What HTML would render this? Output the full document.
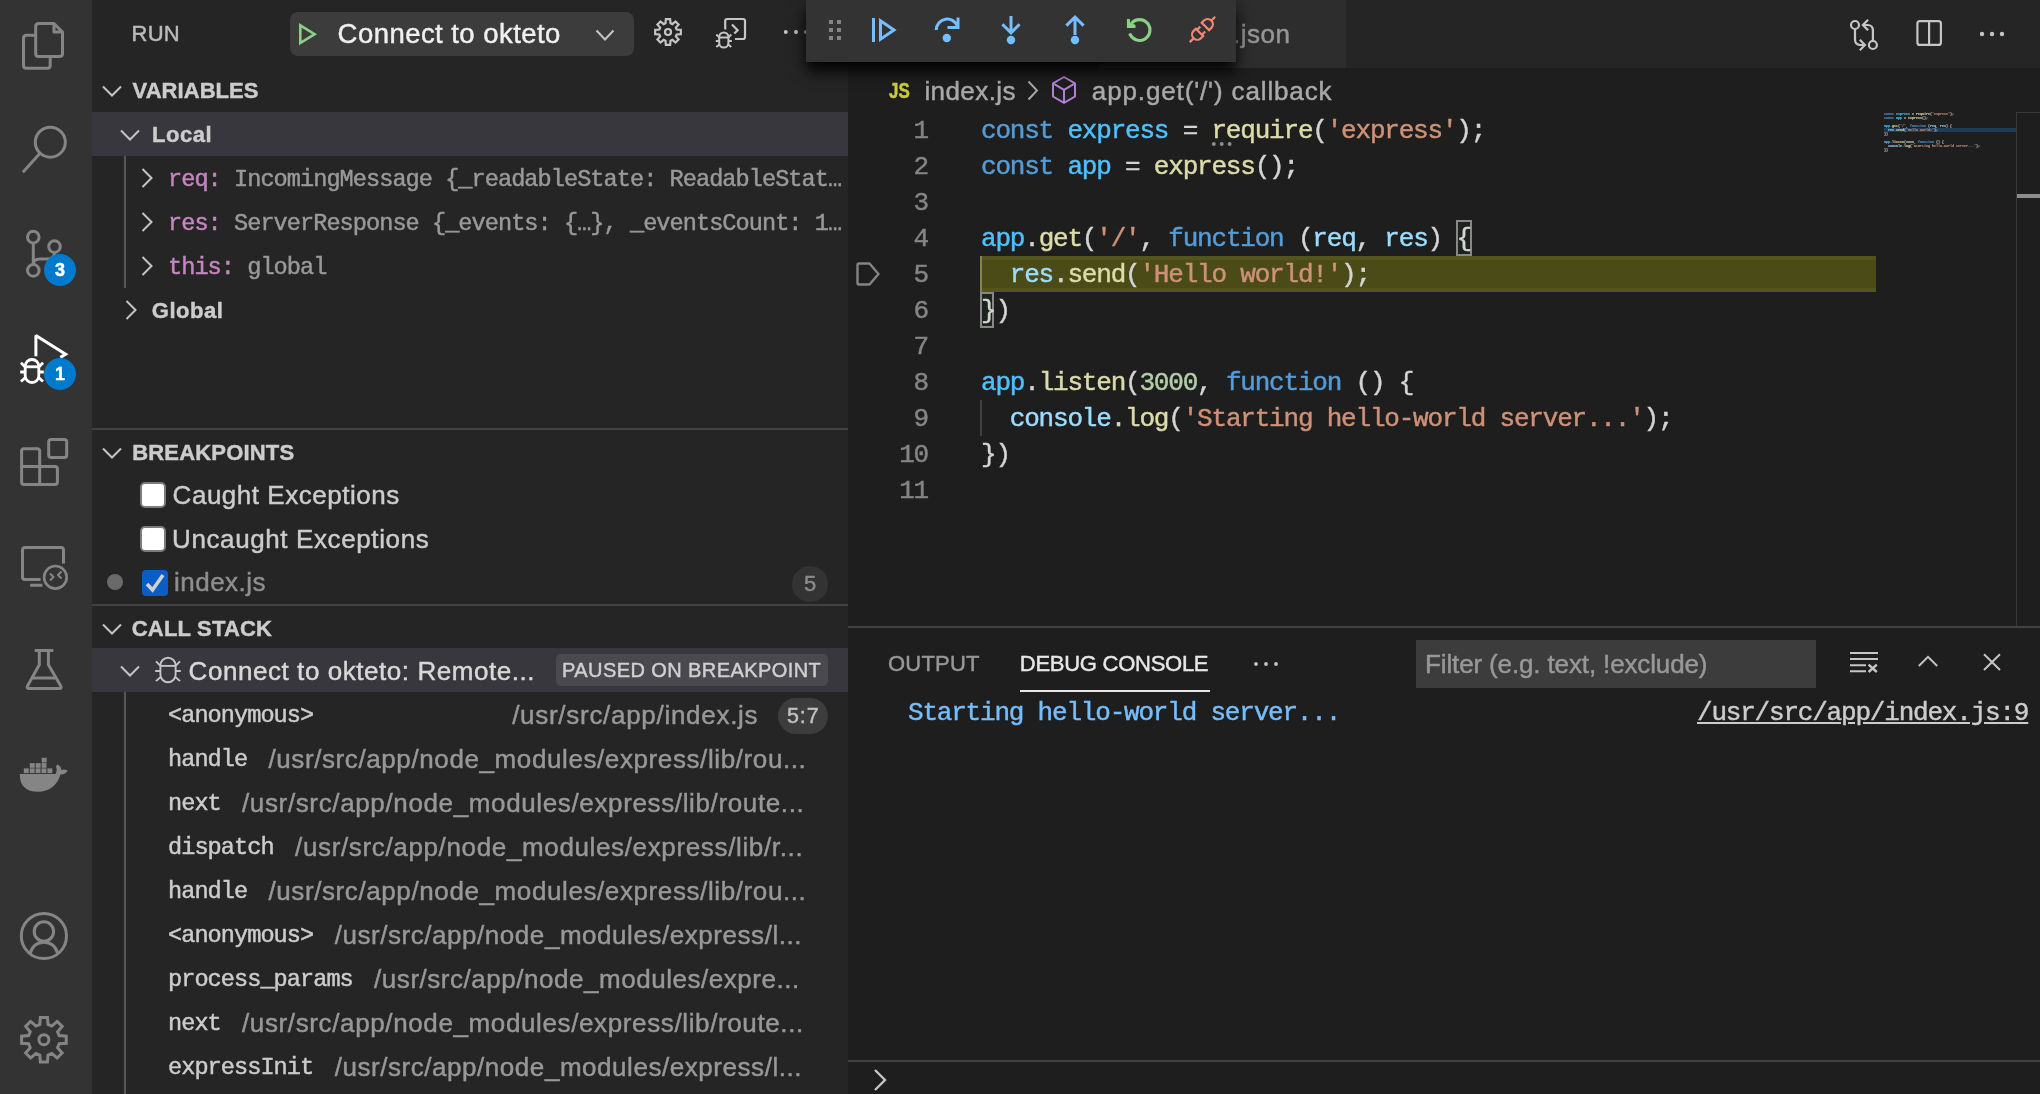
<!DOCTYPE html>
<html lang="en">
<head>
<meta charset="utf-8">
<title>index.js - Run and Debug</title>
<style>
*{box-sizing:border-box;margin:0;padding:0}
html,body{width:2040px;height:1094px;overflow:hidden;background:#1e1e1e}
body{position:relative;font-family:"Liberation Sans",sans-serif;color:#cccccc;-webkit-text-stroke:0.45px}
.abs{position:absolute}
#activity,#sidebar,#editor,#dbgbar{will-change:transform}
.mono{font-family:"Liberation Mono",monospace}
svg{display:block;overflow:visible}
.t{position:absolute;white-space:pre}
#activity{left:0;top:0;width:92px;height:1094px;background:#333333}
.badge{position:absolute;width:32px;height:32px;border-radius:16px;background:#007acc;color:#fff;font-size:18px;font-weight:bold;text-align:center;line-height:32px}
#sidebar{left:92px;top:0;width:756px;height:1094px;background:#252526;overflow:hidden}
.sel{position:absolute;left:0;width:756px;height:44px;background:#37373d}
.hdr{font-weight:bold;font-size:22px;color:#cccccc;height:44px;line-height:44px}
.ui{font-size:26px;height:44px;line-height:44px}
.sm{font-size:23.6px;letter-spacing:-0.96px;height:44px;line-height:47px}
.vn{color:#c586c0}
.vv{color:#999999}
.tw{position:absolute;left:0;top:0;fill:none;stroke:#c5c5c5;stroke-width:2}
#editor{left:848px;top:0;width:1192px;height:1094px;background:#1e1e1e;overflow:hidden}
.ln{position:absolute;left:0;width:80px;text-align:right;color:#858585;font-size:26px;letter-spacing:-1.2px;height:36px;line-height:38px}
.cl{position:absolute;left:133px;font-size:26px;letter-spacing:-1.2px;height:36px;line-height:38px;white-space:pre;color:#d4d4d4}
.k{color:#569cd6}.c{color:#4fc1ff}.f{color:#dcdcaa}.s{color:#ce9178}.v{color:#9cdcfe}.n{color:#b5cea8}
#mm{position:absolute;left:1036px;top:112px;transform-origin:0 0;transform:scale(0.1389,0.1111);width:1000px}
#mm div{height:36px;line-height:36px;font-size:24px;white-space:pre;color:#d4d4d4;font-weight:bold}
</style>
</head>
<body>
<div id="activity" class="abs">
<svg class="abs" style="left:0;top:0" width="92" height="1094" viewBox="0 0 92 1094" fill="none" stroke="#858585" stroke-width="3" stroke-linejoin="round">
<path d="M38.7 23.5 H54 L62.5 32 V53.5 Q62.5 56.5 59.5 56.5 H38.7 Q35.7 56.5 35.7 53.5 V26.5 Q35.7 23.5 38.7 23.5 Z M54 23.5 V32 H62.5"/>
<path d="M35.7 35.3 H26.5 Q23.5 35.3 23.5 38.3 V65.3 Q23.5 68.3 26.5 68.3 H47.2 Q50.2 68.3 50.2 65.3 V56.5"/>
<circle cx="50.3" cy="142.2" r="15"/><path d="M39.8 153.5 L22.9 172.2"/>
<circle cx="33.3" cy="237.1" r="5.8"/><circle cx="33.3" cy="270.4" r="5.8"/><circle cx="54.5" cy="246.6" r="5.8"/>
<path d="M33.3 243 V264.5 M54.5 252.4 Q54.5 259 47 259 H40 Q33.3 259 33.3 264"/>
<path d="M24 448.7 H37.3 Q39.7 448.7 39.7 451.1 V466.6 H55 Q57.4 466.6 57.4 469 V482.1 Q57.4 484.5 55 484.5 H24 Q21.6 484.5 21.6 482.1 V451.1 Q21.6 448.7 24 448.7 Z M39.7 466.6 V484.5 M21.6 466.6 H39.7"/>
<rect x="48.7" y="439.5" width="18" height="18" rx="2.5"/>
<path d="M40.6 579.5 H25 Q22.5 579.5 22.5 577 V550 Q22.5 547.5 25 547.5 H61 Q63.5 547.5 63.5 550 V563.5 M30.2 585.2 H42.4"/>
<circle cx="55.4" cy="577.3" r="11.3" stroke-width="2.6"/>
<path d="M50 573.5 L53.5 577 L50 580.5 M61.5 571.5 L58 575 L61.5 578.5" stroke-width="2"/>
<path d="M34.7 650.5 H53.4 M39.3 650.5 V664.8 L27.5 686 Q26.5 688.5 29 688.5 H59.3 Q61.8 688.5 60.8 686 L48.4 664.8 V650.5 M32.7 678 H55.5"/>
<g stroke="none" fill="#858585">
<path d="M19.8 774 H55.5 Q57.5 770.5 56 766.5 L57.5 764.3 Q61 766.5 61.5 770 Q65 769 67.6 770.6 Q66 774.5 60.5 774.6 Q55 791.8 38 791.8 Q19.7 791.8 19.8 774 Z"/>
<rect x="23.8" y="768.4" width="4.9" height="4.7"/>
<rect x="29.7" y="768.4" width="4.9" height="4.7"/>
<rect x="35.6" y="768.4" width="4.9" height="4.7"/>
<rect x="41.5" y="768.4" width="4.9" height="4.7"/>
<rect x="47.4" y="768.4" width="4.9" height="4.7"/>
<rect x="29.8" y="763.1" width="4.9" height="4.7"/>
<rect x="35.7" y="763.1" width="4.9" height="4.7"/>
<rect x="41.6" y="763.1" width="4.9" height="4.7"/>
<rect x="41.7" y="757.8" width="4.9" height="4.7"/>
</g>
<circle cx="43.9" cy="936" r="22.6"/><circle cx="43.9" cy="931.5" r="9.7"/><path d="M30 953.5 Q33.5 942.3 43.9 942.3 Q54.3 942.3 57.8 953.5"/>
<path d="M47.99 1024.44 L47.44 1017.38 L40.36 1017.38 L39.81 1024.44 L36.00 1026.02 L30.62 1021.42 L25.62 1026.42 L30.22 1031.80 L28.64 1035.61 L21.58 1036.16 L21.58 1043.24 L28.64 1043.79 L30.22 1047.60 L25.62 1052.98 L30.62 1057.98 L36.00 1053.38 L39.81 1054.96 L40.36 1062.02 L47.44 1062.02 L47.99 1054.96 L51.80 1053.38 L57.18 1057.98 L62.18 1052.98 L57.58 1047.60 L59.16 1043.79 L66.22 1043.24 L66.22 1036.16 L59.16 1035.61 L57.58 1031.80 L62.18 1026.42 L57.18 1021.42 L51.80 1026.02 Z" stroke-linejoin="miter"/><circle cx="43.9" cy="1039.7" r="5"/>
<g stroke="#ffffff"><path d="M35.9 356.3 V335.6 L65.6 354.3 L60.3 357.4" stroke-linejoin="miter" stroke-miterlimit="2" stroke-width="3"/></g>
<g fill="none" stroke="#ffffff" stroke-width="2.8" stroke-linecap="butt"><path d="M25.2 366.3 A6.8 6.8 0 0 1 38.8 366.3 V375.7 A6.8 6.8 0 0 1 25.2 375.7 Z"/><path d="M25.2 366.8 H38.8"/><path d="M25.2 372 H20.2 M38.8 372 H43.8"/><path d="M25.2 366.975 L20.95 362.725 M38.8 366.975 L43.05 362.725"/><path d="M25.7 377.325 L20.95 381.575 M38.3 377.325 L43.05 381.575"/></g>
</svg>
<div class="badge" style="left:44px;top:254px">3</div>
<div class="badge" style="left:44px;top:358px">1</div>
</div>
<div id="sidebar" class="abs">
<div id="run" class="t " style="left:39.6px;top:12px;letter-spacing:0.2px;font-size:22px;height:44px;line-height:44px;color:#bbbbbb">RUN</div>
<div class="abs" style="left:198px;top:12px;width:344px;height:44px;border-radius:8px;background:#3c3c3c"></div>
<svg class="abs" style="left:0;top:0" width="1" height="1"><path d="M208.3 25.4 L222.6 34.2 L208.3 43 Z" fill="none" stroke="#89d185" stroke-width="2.6" stroke-linejoin="miter"/></svg>
<div id="cfg" class="t ui" style="left:245.6px;top:12px;letter-spacing:0.452px;color:#f0f0f0;font-size:27.5px">Connect to okteto</div>
<svg class="tw" width="1" height="1" ><path d="M504.5 30.5 L513 39.5 L521.5 30.5"/></svg>
<svg class="abs" style="left:0;top:0" width="756" height="68" viewBox="92 0 756 68" fill="none" stroke="#c5c5c5" stroke-width="2.2">
<path d="M670.48 23.35 L670.15 19.18 L665.85 19.18 L665.52 23.35 L663.64 24.13 L660.45 21.42 L657.42 24.45 L660.13 27.64 L659.35 29.52 L655.18 29.85 L655.18 34.15 L659.35 34.48 L660.13 36.36 L657.42 39.55 L660.45 42.58 L663.64 39.87 L665.52 40.65 L665.85 44.82 L670.15 44.82 L670.48 40.65 L672.36 39.87 L675.55 42.58 L678.58 39.55 L675.87 36.36 L676.65 34.48 L680.82 34.15 L680.82 29.85 L676.65 29.52 L675.87 27.64 L678.58 24.45 L675.55 21.42 L672.36 24.13 Z" stroke-linejoin="miter"/><circle cx="668" cy="32" r="3"/>
<path d="M725.2 29.5 V21 Q725.2 19 727.2 19 H743 Q745 19 745 21 V37 Q745 39 743 39 H735" stroke-linejoin="round"/>
<path d="M732 24.5 L737.6 30.2 L734.3 33.5"/>
<g fill="none" stroke="#c5c5c5" stroke-width="2" stroke-linecap="butt"><path d="M719.2 37 A4.6 4.6 0 0 1 728.4 37 V43 A4.6 4.6 0 0 1 719.2 43 Z"/><path d="M719.2 37.5 H728.4"/><path d="M719.2 41 H715.8 M728.4 41 H731.8"/><path d="M719.2 37.34 L716.31 34.45 M728.4 37.34 L731.29 34.45"/><path d="M719.7 44.18 L716.31 47.07 M727.9 44.18 L731.29 47.07"/></g>
<g fill="#c5c5c5" stroke="none"><circle cx="785.8" cy="32" r="2"/><circle cx="796" cy="32" r="2"/><circle cx="806" cy="32" r="2"/></g>
</svg>
<svg class="tw" width="1" height="1" ><path d="M11 86.5 L20 95.5 L29 86.5"/></svg>
<div id="h_var" class="t hdr" style="left:40.6px;top:69px;letter-spacing:0.05px;">VARIABLES</div>
<div class="sel" style="top:112px"></div>
<svg class="tw" width="1" height="1" ><path d="M29 130.5 L38 139.5 L47 130.5"/></svg>
<div id="local" class="t hdr" style="left:60px;top:113px;letter-spacing:0.55px;">Local</div>
<div class="abs" style="left:32px;top:156px;width:2px;height:132px;background:#585858"></div>
<svg class="tw" width="1" height="1" ><path d="M50.5 169 L59.5 178 L50.5 187"/></svg>
<div id="var0" class="t mono sm" style="left:76px;top:156px;"><span class="vn">req:</span><span class="vv"> IncomingMessage {_readableState: ReadableStat…</span></div>
<svg class="tw" width="1" height="1" ><path d="M50.5 213 L59.5 222 L50.5 231"/></svg>
<div id="var1" class="t mono sm" style="left:76px;top:200px;"><span class="vn">res:</span><span class="vv"> ServerResponse {_events: {…}, _eventsCount: 1…</span></div>
<svg class="tw" width="1" height="1" ><path d="M50.5 257 L59.5 266 L50.5 275"/></svg>
<div id="var2" class="t mono sm" style="left:76px;top:244px;"><span class="vn">this:</span><span class="vv"> global</span></div>
<svg class="tw" width="1" height="1" ><path d="M34.5 301 L43.5 310 L34.5 319"/></svg>
<div id="global" class="t hdr" style="left:59.8px;top:289px;letter-spacing:0.52px;">Global</div>
<div class="abs" style="left:0;top:428px;width:756px;height:2px;background:#424242"></div>
<svg class="tw" width="1" height="1" ><path d="M11 448.5 L20 457.5 L29 448.5"/></svg>
<div id="h_bp" class="t hdr" style="left:40.2px;top:431px;letter-spacing:0.18px;">BREAKPOINTS</div>
<div class="abs" style="left:48px;top:482px;width:26px;height:26px;border-radius:5px;background:#fff;border:2px solid #7c7c7c"></div>
<div id="bp0" class="t ui" style="left:80.6px;top:473px;letter-spacing:0.526px;color:#cccccc">Caught Exceptions</div>
<div class="abs" style="left:48px;top:526px;width:26px;height:26px;border-radius:5px;background:#fff;border:2px solid #7c7c7c"></div>
<div id="bp1" class="t ui" style="left:80px;top:517px;letter-spacing:0.611px;color:#cccccc">Uncaught Exceptions</div>
<div class="abs" style="left:15px;top:574px;width:16px;height:16px;border-radius:8px;background:#6a6a6a"></div>
<div class="abs" style="left:50px;top:570px;width:26px;height:26px;border-radius:4px;background:#0b5cc4"></div>
<svg class="abs" style="left:0;top:0" width="1" height="1"><path d="M55 584 L60.5 590 L71 575" fill="none" stroke="#d0d0d0" stroke-width="3.6"/></svg>
<div id="bp2" class="t ui" style="left:82px;top:560px;letter-spacing:0.486px;color:#8e8e8e">index.js</div>
<div class="abs" style="left:700px;top:566px;width:36px;height:36px;border-radius:18px;background:#333334"></div>
<div id="bpn" class="t " style="left:712px;top:566px;font-size:22px;height:36px;line-height:36px;color:#8b8b8b">5</div>
<div class="abs" style="left:0;top:604px;width:756px;height:2px;background:#424242"></div>
<svg class="tw" width="1" height="1" ><path d="M11 624.5 L20 633.5 L29 624.5"/></svg>
<div id="h_cs" class="t hdr" style="left:39.8px;top:607px;letter-spacing:0.176px;">CALL STACK</div>
<div class="sel" style="top:648px"></div>
<svg class="tw" width="1" height="1" ><path d="M29 666.5 L38 675.5 L47 666.5"/></svg>
<svg class="abs" style="left:0;top:0" width="756" height="1094" viewBox="92 0 756 1094"><g fill="none" stroke="#c5c5c5" stroke-width="1.9" stroke-linecap="butt"><path d="M160.4 665.4 A7.6 7.6 0 0 1 175.6 665.4 V674.6 A7.6 7.6 0 0 1 160.4 674.6 Z"/><path d="M160.4 665.9 H175.6"/><path d="M160.4 671 H155.2 M175.6 671 H180.8"/><path d="M160.4 665.73 L155.98 661.31 M175.6 665.73 L180.02 661.31"/><path d="M160.9 676.71 L155.98 681.13 M175.1 676.71 L180.02 681.13"/></g></svg>
<div id="sess" class="t ui" style="left:96.6px;top:649px;letter-spacing:0.556px;color:#d8d8d8">Connect to okteto: Remote...</div>
<div class="abs" style="left:464px;top:654px;width:272px;height:32px;border-radius:5px;background:#49494e"></div>
<div id="paused" class="t " style="left:470px;top:654px;letter-spacing:0.421px;font-size:20px;height:32px;line-height:32px;color:#d0d0d0">PAUSED ON BREAKPOINT</div>
<div class="abs" style="left:32px;top:692px;width:2px;height:402px;background:#585858"></div>
<div id="fn0" class="t mono sm" style="left:76px;top:692px;color:#cccccc">&lt;anonymous&gt;</div>
<div id="fp0" class="t ui" style="left:420.2px;top:693px;letter-spacing:0.71px;color:#989898">/usr/src/app/index.js</div>
<div id="fn1" class="t mono sm" style="left:76px;top:736px;color:#cccccc">handle</div>
<div id="fp1" class="t ui" style="left:176.4px;top:737px;letter-spacing:0.601px;color:#989898">/usr/src/app/node_modules/express/lib/rou...</div>
<div id="fn2" class="t mono sm" style="left:76px;top:780px;color:#cccccc">next</div>
<div id="fp2" class="t ui" style="left:150px;top:781px;letter-spacing:0.634px;color:#989898">/usr/src/app/node_modules/express/lib/route...</div>
<div id="fn3" class="t mono sm" style="left:76px;top:824px;color:#cccccc">dispatch</div>
<div id="fp3" class="t ui" style="left:203.1px;top:825px;letter-spacing:0.641px;color:#989898">/usr/src/app/node_modules/express/lib/r...</div>
<div id="fn4" class="t mono sm" style="left:76px;top:868px;color:#cccccc">handle</div>
<div id="fp4" class="t ui" style="left:176.4px;top:869px;letter-spacing:0.601px;color:#989898">/usr/src/app/node_modules/express/lib/rou...</div>
<div id="fn5" class="t mono sm" style="left:76px;top:912px;color:#cccccc">&lt;anonymous&gt;</div>
<div id="fp5" class="t ui" style="left:242.7px;top:913px;letter-spacing:0.547px;color:#989898">/usr/src/app/node_modules/express/l...</div>
<div id="fn6" class="t mono sm" style="left:76px;top:956px;color:#cccccc">process_params</div>
<div id="fp6" class="t ui" style="left:282.1px;top:957px;letter-spacing:0.533px;color:#989898">/usr/src/app/node_modules/expre...</div>
<div id="fn7" class="t mono sm" style="left:76px;top:1000px;color:#cccccc">next</div>
<div id="fp7" class="t ui" style="left:150px;top:1001px;letter-spacing:0.622px;color:#989898">/usr/src/app/node_modules/express/lib/route...</div>
<div id="fn8" class="t mono sm" style="left:76px;top:1044px;color:#cccccc">expressInit</div>
<div id="fp8" class="t ui" style="left:242.7px;top:1045px;letter-spacing:0.547px;color:#989898">/usr/src/app/node_modules/express/l...</div>
<div class="abs" style="left:686px;top:698px;width:50px;height:36px;border-radius:18px;background:#3d3d3e"></div>
<div id="lc" class="t " style="left:695px;top:698px;font-size:21.5px;letter-spacing:0.9px;height:36px;line-height:36px;color:#c0c0c0">5:7</div>
</div>
<div id="editor" class="abs">
<div class="abs" style="left:0;top:0;width:1192px;height:68px;background:#252526"></div>
<div class="abs" style="left:0;top:0;width:250px;height:68px;background:#1e1e1e"></div>
<div class="abs" style="left:252px;top:0;width:246px;height:68px;background:#2d2d2d"></div>
<div id="tab2" class="t ui" style="left:305px;top:12px;letter-spacing:0.55px;color:#969696">launch.json</div>
<svg class="abs" style="left:0;top:0" width="1192" height="68" viewBox="848 0 1192 68" fill="none" stroke="#c5c5c5" stroke-width="2.2">
<circle cx="1855" cy="25" r="4"/><circle cx="1872.9" cy="45" r="4"/>
<path d="M1855 29.2 V39.5 Q1855 45 1860.5 45 H1864.5 M1859.8 39.8 L1865 45 L1859.8 50.2"/>
<path d="M1872.9 40.8 V30.5 Q1872.9 25 1867.4 25 H1863.4 M1868.1 19.8 L1862.9 25 L1868.1 30.2"/>
<rect x="1917.4" y="21.1" width="23.5" height="23.8" rx="2.5"/><path d="M1929.1 21 V45"/>
<g fill="#c5c5c5" stroke="none"><circle cx="1982" cy="34" r="2.2"/><circle cx="1992" cy="34" r="2.2"/><circle cx="2002" cy="34" r="2.2"/></g>
</svg>
<div id="js" class="t " style="left:41px;top:79px;font-size:22px;font-weight:bold;color:#cbcb41;line-height:24px;height:24px;transform-origin:0 50%;transform:scaleX(0.77)">JS</div>
<div id="bc1" class="t ui" style="left:76.4px;top:69px;letter-spacing:0.429px;color:#a9a9a9">index.js</div>
<svg class="abs" style="left:0;top:0" width="1" height="1"><path d="M180.5 81.5 L189 90.5 L180.5 99.5" fill="none" stroke="#a9a9a9" stroke-width="1.9"/></svg>
<svg class="abs" style="left:0;top:0" width="1192" height="120" viewBox="848 0 1192 120" fill="none" stroke="#b180d7" stroke-width="2" stroke-linejoin="round"><path d="M1064 77 L1075 83.3 V96.5 L1064 102.8 L1053 96.5 V83.3 Z M1053 83.3 L1064 89.8 L1075 83.3 M1064 89.8 V102.8"/></svg>
<div id="bc2" class="t ui" style="left:243.8px;top:69px;letter-spacing:0.87px;color:#a9a9a9">app.get('/') callback</div>
<div class="abs" style="left:132px;top:256px;width:896px;height:36px;background:#4b4b18;border-top:4px solid #54541d;border-bottom:4px solid #54541d"></div>
<div class="abs" style="left:132px;top:256px;width:2px;height:36px;background:#85854a"></div>
<div class="abs" style="left:132px;top:400px;width:2px;height:36px;background:#404040"></div>
<div class="abs" style="left:608px;top:220px;width:16px;height:36px;border:2px solid #888888;background:#1b251b"></div>
<div class="abs" style="left:132px;top:292px;width:14px;height:36px;border:2px solid #888888;background:#1b251b"></div>
<div class="ln mono" style="top:112px">1</div>
<div class="cl mono" style="top:112px"><span class="k">const</span> <span class="c">express</span> = <span class="f">require</span>(<span class="s">'express'</span>);</div>
<div class="ln mono" style="top:148px">2</div>
<div class="cl mono" style="top:148px"><span class="k">const</span> <span class="c">app</span> = <span class="f">express</span>();</div>
<div class="ln mono" style="top:184px">3</div>
<div class="ln mono" style="top:220px">4</div>
<div class="cl mono" style="top:220px"><span class="c">app</span>.<span class="f">get</span>(<span class="s">'/'</span>, <span class="k">function</span> (<span class="v">req</span>, <span class="v">res</span>) {</div>
<div class="ln mono" style="top:256px">5</div>
<div class="cl mono" style="top:256px">  <span class="v">res</span>.<span class="f">send</span>(<span class="s">'Hello world!'</span>);</div>
<div class="ln mono" style="top:292px">6</div>
<div class="cl mono" style="top:292px">})</div>
<div class="ln mono" style="top:328px">7</div>
<div class="ln mono" style="top:364px">8</div>
<div class="cl mono" style="top:364px"><span class="c">app</span>.<span class="f">listen</span>(<span class="n">3000</span>, <span class="k">function</span> () {</div>
<div class="ln mono" style="top:400px">9</div>
<div class="cl mono" style="top:400px">  <span class="v">console</span>.<span class="f">log</span>(<span class="s">'Starting hello-world server...'</span>);</div>
<div class="ln mono" style="top:436px">10</div>
<div class="cl mono" style="top:436px">})</div>
<div class="ln mono" style="top:472px">11</div>
<svg class="abs" style="left:0;top:0" width="1" height="1"><path d="M11 263.5 H21.5 L30.5 274 L21.5 284.5 H11 Q9.5 284.5 9.5 283 V265 Q9.5 263.5 11 263.5 Z" fill="none" stroke="#848484" stroke-width="2.4" stroke-linejoin="round"/></svg>
<svg class="abs" style="left:0;top:0" width="1" height="1"><g fill="#8c8c8c"><circle cx="365.8" cy="144" r="2"/><circle cx="373.7" cy="144" r="2"/><circle cx="381.6" cy="144" r="2"/></g></svg>
<div class="abs" style="left:1036px;top:128px;width:132px;height:4px;background:#1f3d5a"></div>
<div id="mm" class="mono">
<div><span class="k">const</span> <span class="c">express</span> = <span class="f">require</span>(<span class="s">'express'</span>);</div>
<div><span class="k">const</span> <span class="c">app</span> = <span class="f">express</span>();</div>
<div> </div>
<div><span class="c">app</span>.<span class="f">get</span>(<span class="s">'/'</span>, <span class="k">function</span> (<span class="v">req</span>, <span class="v">res</span>) {</div>
<div>  <span class="v">res</span>.<span class="f">send</span>(<span class="s">'Hello world!'</span>);</div>
<div>})</div>
<div> </div>
<div><span class="c">app</span>.<span class="f">listen</span>(<span class="n">3000</span>, <span class="k">function</span> () {</div>
<div>  <span class="v">console</span>.<span class="f">log</span>(<span class="s">'Starting hello-world server...'</span>);</div>
<div>})</div>
<div> </div>
</div>
<div class="abs" style="left:1168px;top:112px;width:1px;height:514px;background:#3a3a3a"></div>
<div class="abs" style="left:1169px;top:194px;width:23px;height:4px;background:#8e8e8e"></div>
<div class="abs" style="left:1168px;top:112px;width:24px;height:1px;background:#3a3a3a"></div>
<div class="abs" style="left:0;top:626px;width:1192px;height:2px;background:#424242"></div>
<div id="pt1" class="t " style="left:40px;top:642px;letter-spacing:0.2px;font-size:22px;height:44px;line-height:44px;color:#979797">OUTPUT</div>
<div id="pt2" class="t " style="left:171.8px;top:642px;letter-spacing:-0.265px;font-size:22px;height:44px;line-height:44px;color:#e7e7e7">DEBUG CONSOLE</div>
<div class="abs" style="left:172px;top:690px;width:190px;height:2px;background:#e7e7e7"></div>
<svg class="abs" style="left:0;top:0" width="1" height="1"><g fill="#c5c5c5"><circle cx="408" cy="664" r="1.9"/><circle cx="418" cy="664" r="1.9"/><circle cx="428" cy="664" r="1.9"/></g></svg>
<div class="abs" style="left:568px;top:640px;width:400px;height:48px;background:#3c3c3c"></div>
<div id="filt" class="t " style="left:577px;top:640px;letter-spacing:-0.133px;font-size:26px;height:48px;line-height:48px;color:#989898">Filter (e.g. text, !exclude)</div>
<svg class="abs" style="left:0;top:600px" width="1192" height="100" viewBox="848 600 1192 100" fill="none" stroke="#c5c5c5" stroke-width="2">
<path d="M1850 653 H1878 M1850 659 H1878 M1850 665.2 H1866 M1850 671.2 H1866"/>
<path d="M1868.6 664.6 L1876.8 672 M1876.8 664.6 L1868.6 672" stroke-width="2.4"/>
<path d="M1918.8 666 L1928 656.8 L1937.2 666" stroke-width="1.9"/>
<path d="M1984 654.2 L2000 670 M2000 654.2 L1984 670" stroke-width="2"/>
</svg>
<div id="out1" class="t mono" style="left:60px;top:694px;height:36px;line-height:38px;font-size:26px;letter-spacing:-1.2px;color:#75beff">Starting hello-world server...</div>
<div id="out2" class="t mono" style="left:849px;top:694px;height:36px;line-height:38px;font-size:26px;letter-spacing:-1.2px;color:#cccccc;text-decoration:underline">/usr/src/app/index.js:9</div>
<div class="abs" style="left:0;top:1060px;width:1192px;height:2px;background:#424242"></div>
<svg class="abs" style="left:0;top:0" width="1" height="1"><path d="M27 1070 L37 1080 L27 1090" fill="none" stroke="#c5c5c5" stroke-width="2.4"/></svg>
</div>
<div id="dbgbar">
<div class="abs" style="left:806px;top:0;width:430px;height:62px;background:#333333;box-shadow:0 9px 14px rgba(0,0,0,0.95)"></div>
<svg class="abs" style="left:0;top:0" width="2040" height="70" viewBox="0 0 2040 70" fill="none" stroke="#75beff" stroke-width="3">
<g fill="#858585" stroke="none"><rect x="829" y="20" width="4" height="4"/><rect x="829" y="28" width="4" height="4"/><rect x="829" y="36" width="4" height="4"/><rect x="837" y="20" width="4" height="4"/><rect x="837" y="28" width="4" height="4"/><rect x="837" y="36" width="4" height="4"/></g>
<path d="M873.5 18 V42"/><path d="M880.5 20.8 L894 30 L880.5 39.2 Z" stroke-linejoin="miter"/>
<path d="M936.2 30 A11 11 0 0 1 957.6 26.5"/><path d="M958 17.5 V27.5 H947.5"/><circle cx="946.8" cy="38" r="4.2" fill="#75beff" stroke="none"/>
<path d="M1011 16 V32 M1002.4 24.2 L1011 32.8 L1019.6 24.2"/><circle cx="1011" cy="40" r="4.2" fill="#75beff" stroke="none"/>
<path d="M1075 35 V18 M1066.4 25.6 L1075 17 L1083.6 25.6"/><circle cx="1075" cy="40" r="4.2" fill="#75beff" stroke="none"/>
<path d="M1131.49 23.28 A10.45 10.45 0 1 1 1129.68 33.57" stroke="#89d185" stroke-width="3.2"/><path d="M1126.9 18.9 H1129.9 V22.2 L1135.5 25.1 V28.1 H1126.9 Z" fill="#89d185" stroke="none"/>
<g transform="translate(1202.45 29.4) rotate(-45)" stroke="#f48771" stroke-width="2.2" stroke-linejoin="miter"><path d="M-18 0 H-12.3 M12.3 0 H18 M-4.2 -3.5 H0.4 M-4.2 3.5 H0.4"/><path d="M-4.2 -5.2 H-7.3 A5.2 5.2 0 0 0 -7.3 5.2 H-4.2 Z M4.2 -5.2 H7.3 A5.2 5.2 0 0 1 7.3 5.2 H4.2 Z"/></g>
</svg>
</div>
</body>
</html>
